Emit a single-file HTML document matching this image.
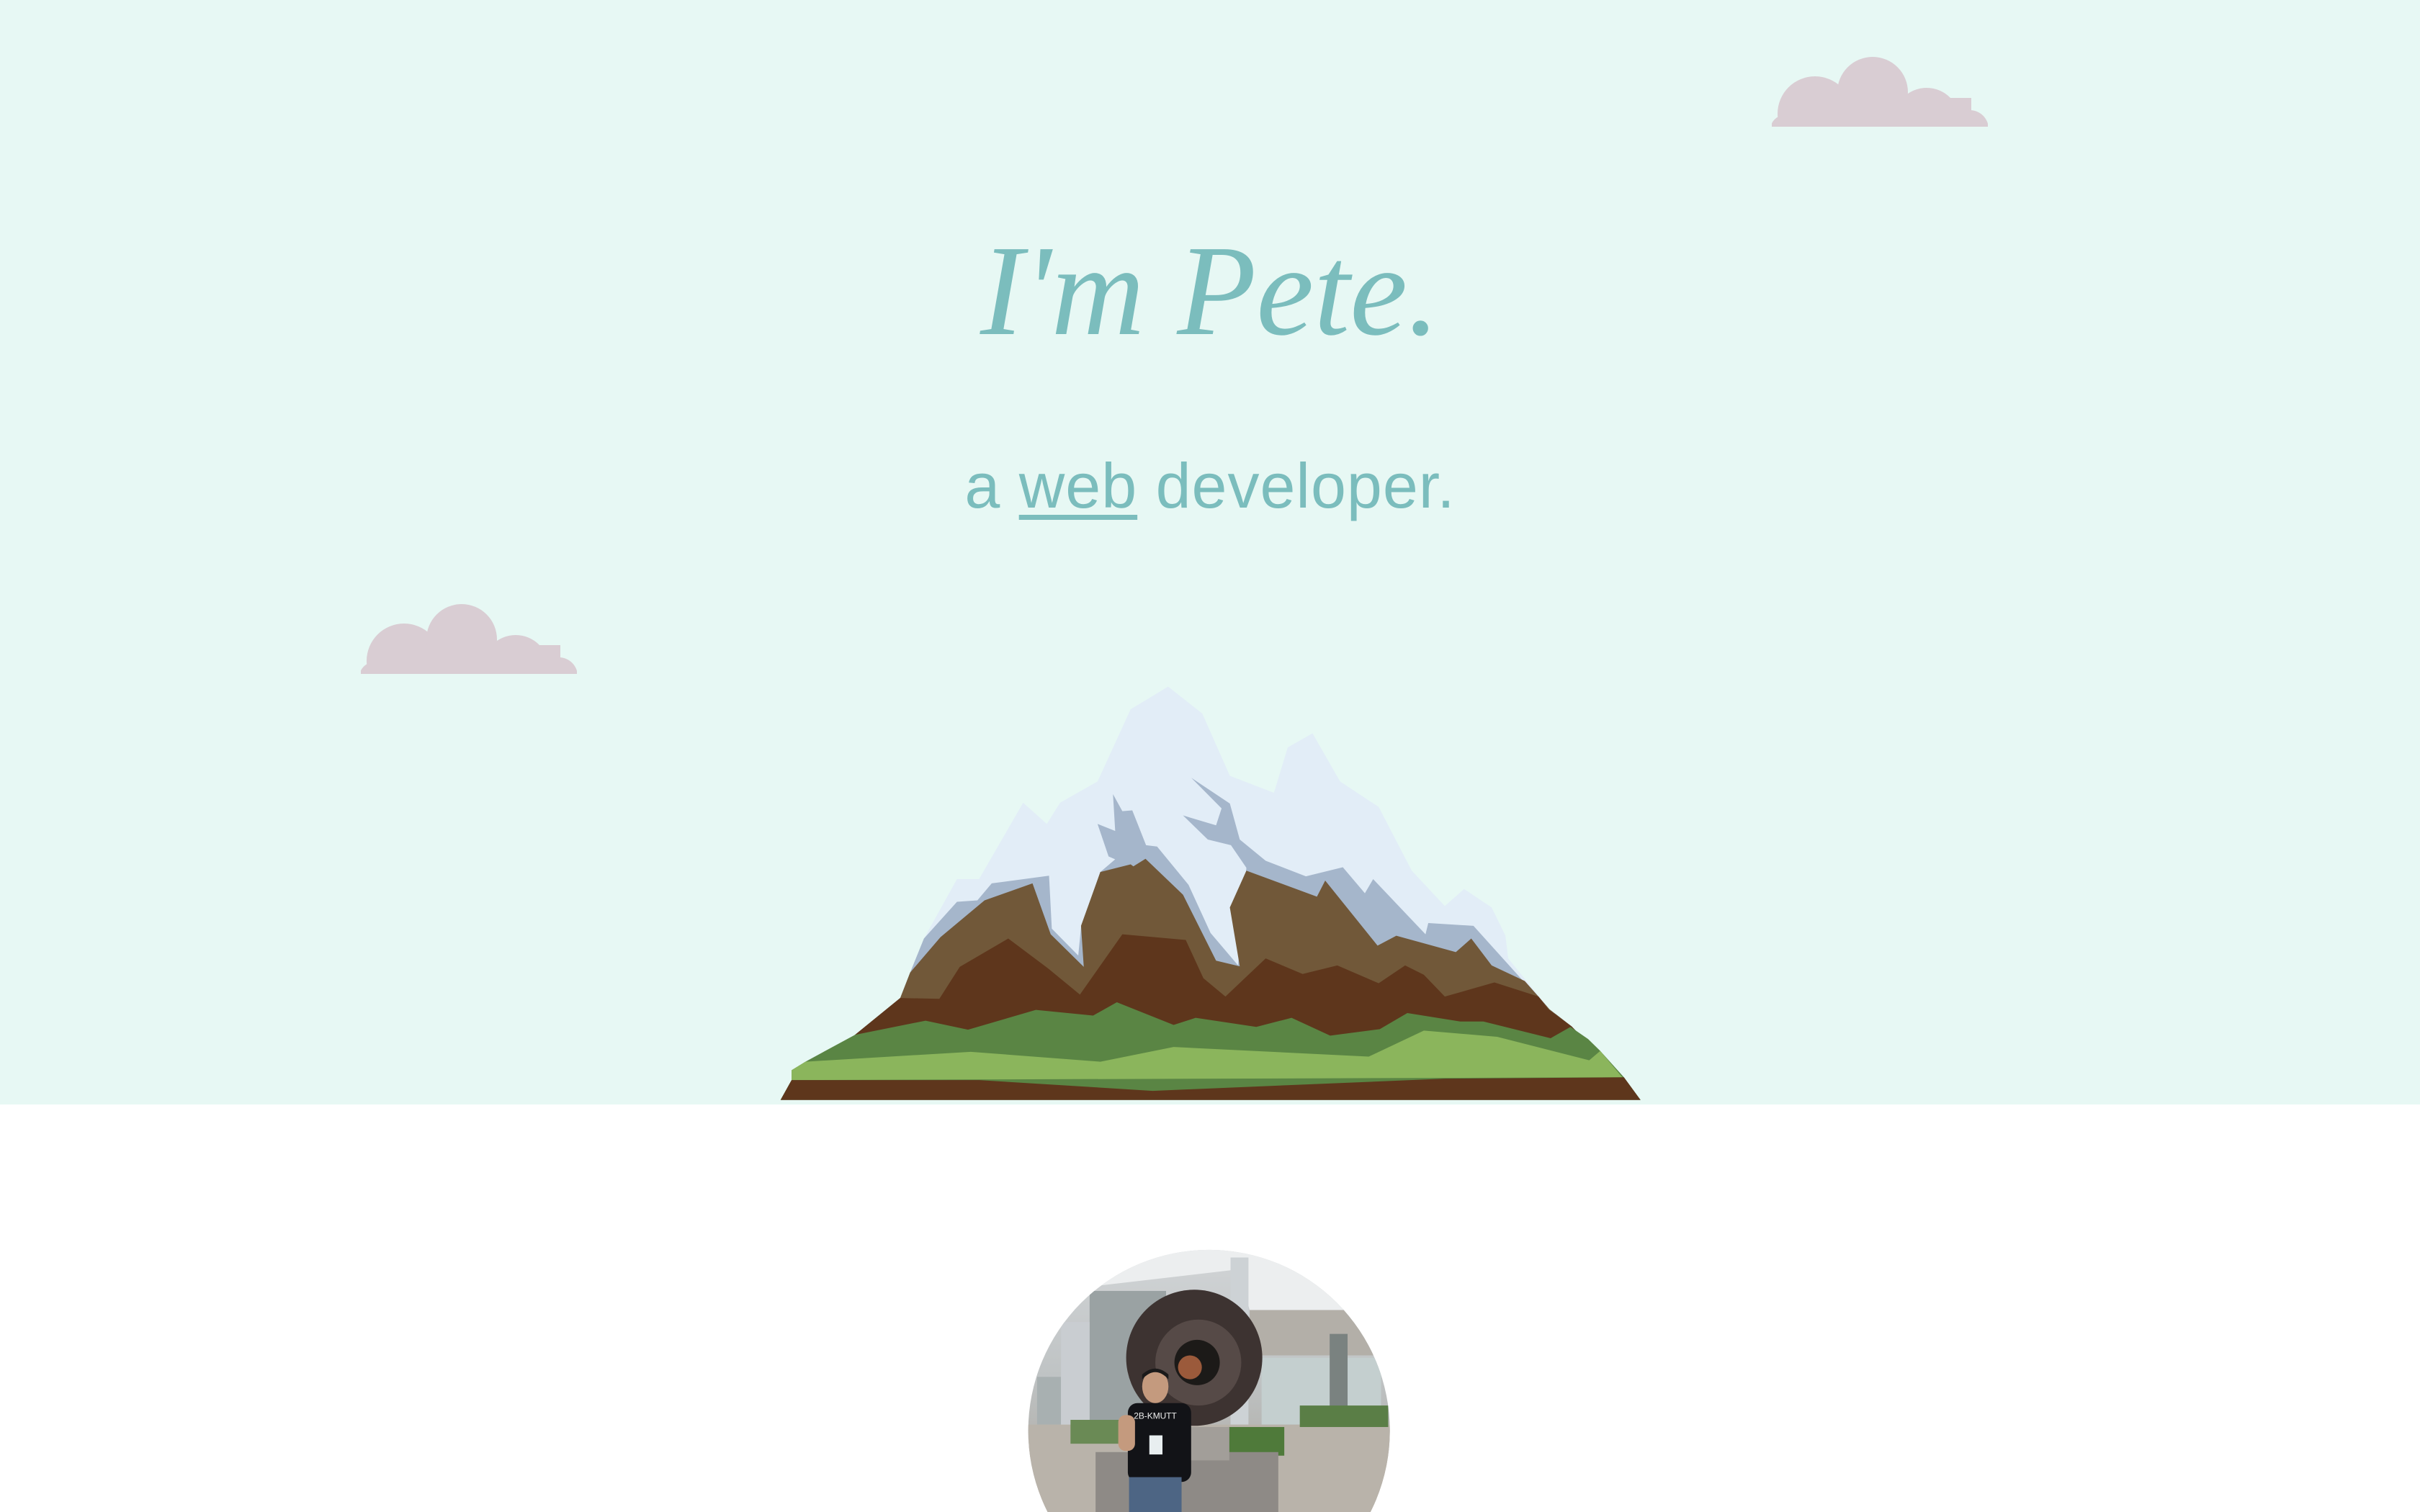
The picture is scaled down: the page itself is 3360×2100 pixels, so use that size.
<!DOCTYPE html>
<html><head><meta charset="utf-8"><style>
html,body{margin:0;padding:0}
body{width:3360px;height:2100px;overflow:hidden;background:#fff;position:relative;font-family:"Liberation Sans",sans-serif}
.hero{position:absolute;left:0;top:0;width:3360px;height:1534px;background:#e7f8f4}
.title{position:absolute;left:0;width:3360px;top:284px;text-align:center;font-family:"Liberation Serif",serif;font-style:italic;font-size:180px;line-height:240px;color:#7bbdbd;margin:0;font-weight:normal}
.sub{position:absolute;left:0;width:3360px;top:615px;text-align:center;font-size:88px;line-height:120px;color:#7bbdbd;letter-spacing:1px}
.sub u{text-decoration-thickness:7px;text-underline-offset:10px}
svg{position:absolute;display:block}
</style></head><body>
<div class="hero"></div>
<svg style="left:2460px;top:76px" width="300" height="100" viewBox="0 0 300 100"><g fill="#d9cdd3"><circle cx="60" cy="82" r="52"/><circle cx="140" cy="52" r="49"/><circle cx="215" cy="92" r="46"/><circle cx="275" cy="103" r="26"/><circle cx="18" cy="104" r="20"/><rect x="15" y="60" width="262" height="40"/></g></svg>
<svg style="left:501px;top:836px" width="300" height="100" viewBox="0 0 300 100"><g fill="#d9cdd3"><circle cx="60" cy="82" r="52"/><circle cx="140" cy="52" r="49"/><circle cx="215" cy="92" r="46"/><circle cx="275" cy="103" r="26"/><circle cx="18" cy="104" r="20"/><rect x="15" y="60" width="262" height="40"/></g></svg>
<h1 class="title">I'm Pete.</h1>
<div class="sub">a <u>web</u> developer.</div>
<svg style="left:1080px;top:934px" width="1200" height="620" viewBox="0 0 1568 1577" preserveAspectRatio="none">
<polygon fill="#e2edf7" points="225,1150 265,940 325,730 365,730 445,460 488,535 512,460 580,385 640,130 708,50 770,145 820,365 900,425 925,265 970,215 1020,385 1090,475 1150,700 1210,825 1245,765 1295,830 1320,930 1325,1010 1400,1190 1440,1250 1500,1380 1530,1430 1565,1510 5,1510 25,1440 25,1405 50,1375 140,1280"/>
<polygon fill="#a5b6cb" points="222,1150 240,1060 265,940 325,810 362,805 388,745 492,718 497,905 545,1000 550,900 585,705 612,660 600,650 580,535 612,560 608,430 625,490 643,487 668,610 688,615 745,750 785,920 835,1035 850,690 822,610 780,590 735,505 795,540 805,480 750,372 820,463 838,590 885,665 958,720 1025,688 1065,780 1080,730 1175,925 1180,885 1262,895 1350,1085 1400,1190 1440,1250 1530,1430 1565,1510 5,1510 25,1440 140,1280"/>
<polygon fill="#715839" points="222,1150 240,1060 295,935 375,805 462,745 495,925 555,1040 550,895 585,705 640,678 645,685 667,658 735,785 795,1018 838,1038 820,830 850,700 978,792 993,735 1088,965 1122,930 1230,988 1258,940 1295,1035 1355,1090 1380,1145 1400,1190 1440,1250 1530,1430 1565,1510 5,1510 25,1440 140,1280"/>
<polygon fill="#5e361c" points="140,1280 222,1150 293,1153 330,1040 418,940 490,1045 548,1138 625,925 740,945 772,1080 812,1145 885,1010 952,1065 1015,1035 1090,1098 1138,1035 1172,1068 1210,1145 1300,1095 1380,1145 1398,1190 1440,1250 1530,1430 1565,1510 5,1510 25,1440"/>
<polygon fill="#5a8544" points="50,1375 140,1280 268,1230 345,1262 468,1192 572,1212 615,1165 718,1245 758,1220 868,1252 932,1220 1002,1283 1092,1260 1142,1203 1238,1233 1280,1233 1402,1292 1438,1252 1470,1295 1492,1337 1535,1430 1565,1510 5,1510 25,1440 25,1405"/>
<polygon fill="#8bb55c" points="25,1405 50,1375 350,1340 585,1375 718,1323 1072,1357 1172,1265 1305,1287 1472,1370 1492,1337 1532,1430 25,1440"/>
<polygon fill="#5e361c" points="25,1440 365,1440 680,1478 1210,1435 1535,1430 1565,1510 5,1510"/>
</svg>
<svg style="left:1420px;top:1720px" width="520" height="380" viewBox="0 0 1568 1146" preserveAspectRatio="none">
<defs><clipPath id="c"><circle cx="780" cy="805" r="757"/></clipPath>
<linearGradient id="g" x1="0" y1="0" x2="0" y2="1"><stop offset="0" stop-color="#d3d6d8"/><stop offset="0.5" stop-color="#bfc3c4"/><stop offset="1" stop-color="#a9a49c"/></linearGradient></defs>
<g clip-path="url(#c)">
<rect width="1568" height="1146" fill="url(#g)"/>
<polygon fill="#eceeef" points="0,0 1568,0 1568,300 950,300 900,130 300,200 0,260"/>
<rect x="280" y="220" width="320" height="560" fill="#9aa2a3"/>
<rect x="60" y="580" width="220" height="200" fill="#a8b0b1"/>
<rect x="160" y="350" width="120" height="450" fill="#c9cdd1"/>
<rect x="870" y="80" width="75" height="700" fill="#cdd2d5"/>
<rect x="950" y="300" width="620" height="190" fill="#b3afa8"/>
<rect x="1000" y="500" width="500" height="280" fill="#c4cfcf"/>
<rect x="1285" y="400" width="75" height="400" fill="#7a8280"/>
<rect x="0" y="780" width="1568" height="400" fill="#b9b3aa"/>
<rect x="860" y="790" width="235" height="120" fill="#4f7a3a"/>
<rect x="1160" y="700" width="370" height="90" fill="#5a7e46"/>
<rect x="200" y="760" width="220" height="100" fill="#6a8a55"/>
<rect x="305" y="895" width="765" height="260" fill="#8e8a86"/>
<rect x="700" y="790" width="165" height="140" fill="#a29e99"/>
<circle cx="718" cy="500" r="285" fill="#3d3331"/>
<circle cx="735" cy="520" r="180" fill="#564a47"/>
<circle cx="730" cy="520" r="95" fill="#1c1a18"/>
<circle cx="700" cy="540" r="50" fill="#9b5a3b"/>
<rect x="440" y="690" width="265" height="330" rx="40" fill="#121317"/>
<rect x="445" y="1000" width="220" height="150" fill="#4d6584"/>
<ellipse cx="555" cy="620" rx="55" ry="70" fill="#c49a7e"/>
<path d="M500 590 Q555 530 610 590 L610 570 Q555 520 500 570Z" fill="#1b1a1a"/>
<rect x="530" y="825" width="55" height="80" fill="#e8eef0"/>
<rect x="400" y="740" width="70" height="150" rx="30" fill="#c49a7e"/>
<text x="465" y="755" font-size="36" fill="#eee" font-family="Liberation Sans">2B-KMUTT</text>
</g>
</svg>
</body></html>
